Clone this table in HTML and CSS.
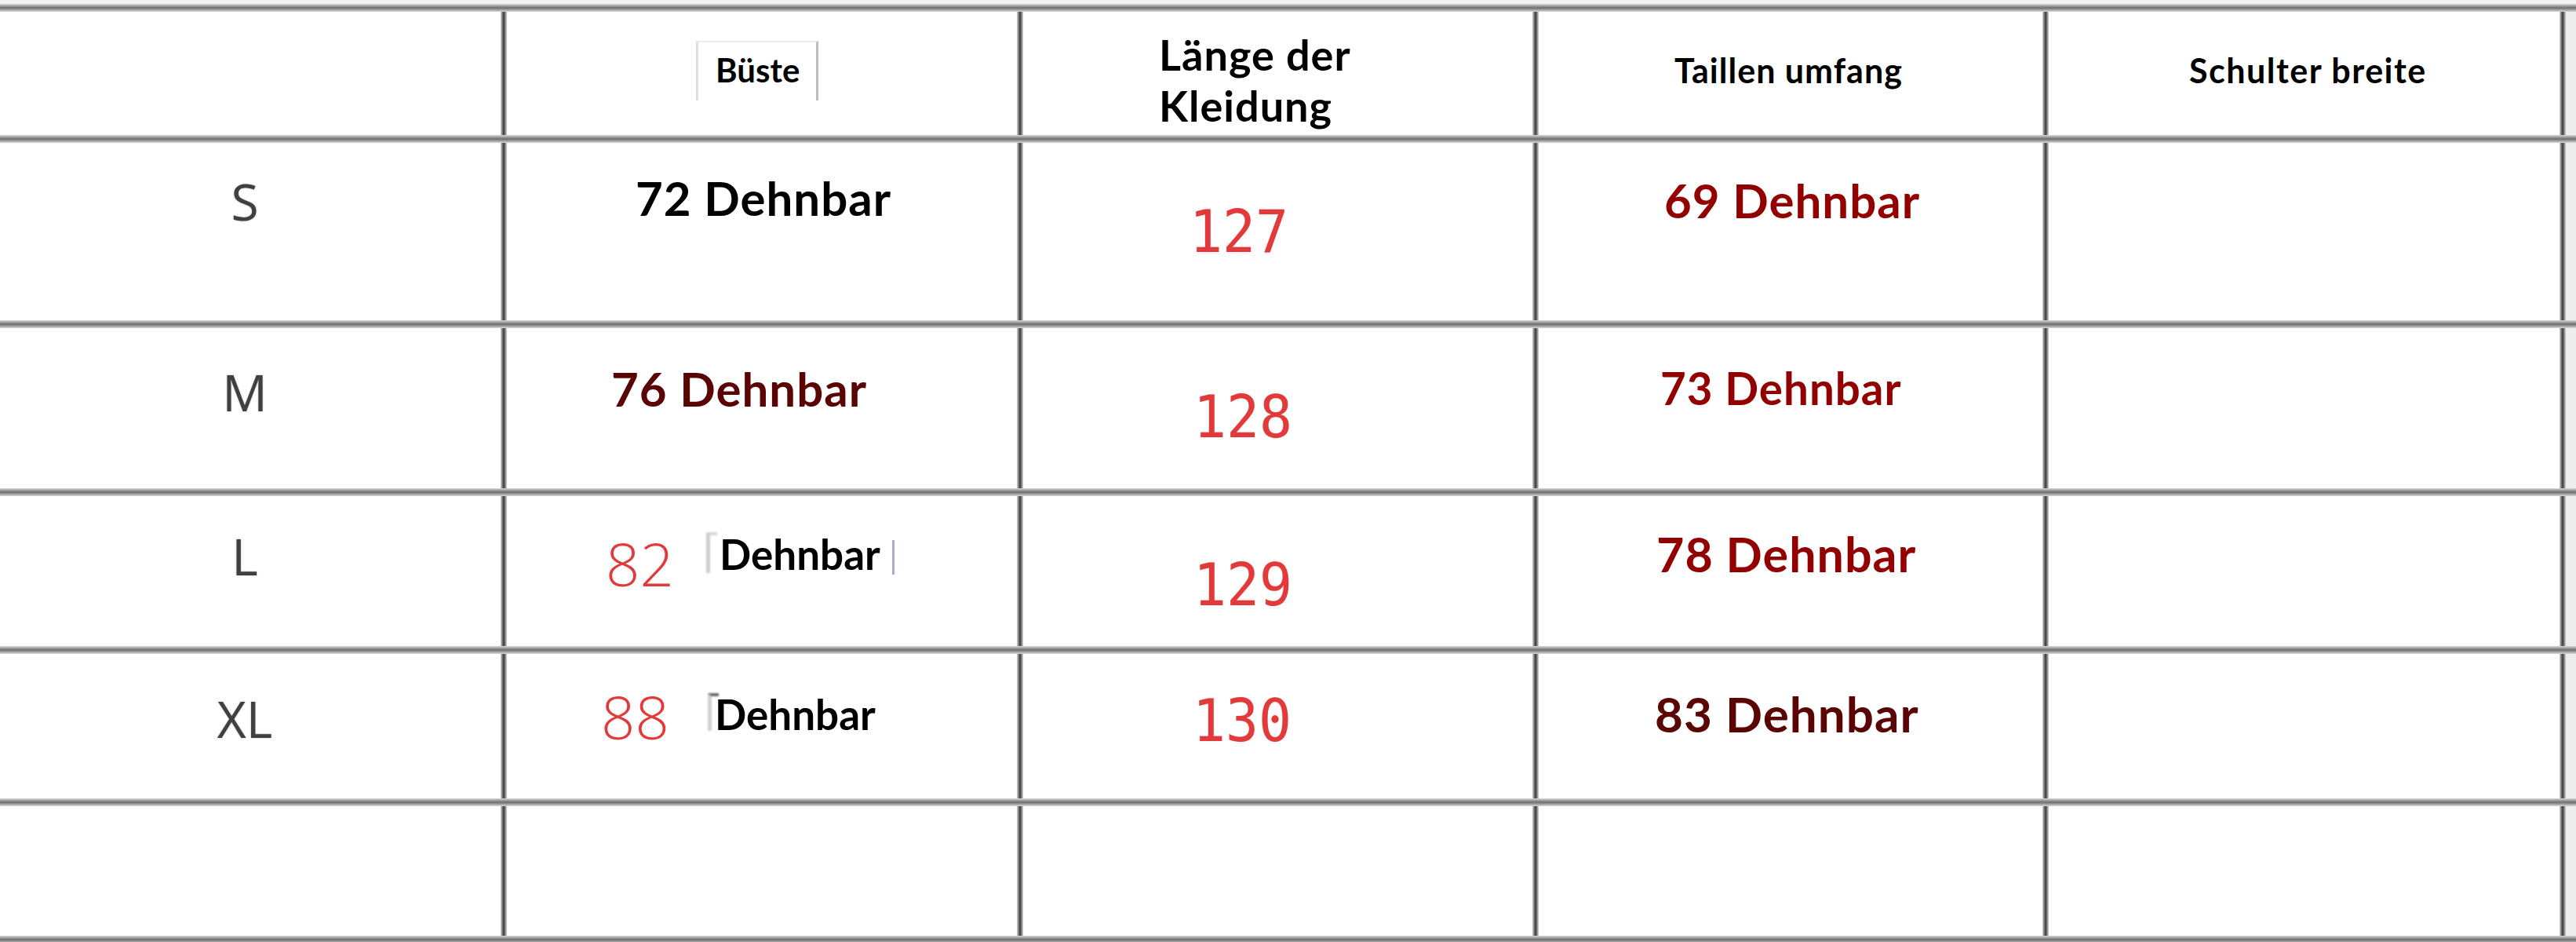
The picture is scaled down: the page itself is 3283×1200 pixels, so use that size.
FILE: index.html
```html
<!DOCTYPE html>
<html lang="de">
<head>
<meta charset="utf-8">
<title>Größentabelle</title>
<link rel="stylesheet" href="styles.css">
</head>
<body>
<div class="sheet">
  <div class="topband"></div>
  <div class="hline"></div>

  <div class="row r-head">
    <div class="cell"></div>
    <div class="vline"></div>
    <div class="cell"><span class="box-label"><span class="bold h-buste">Büste</span></span></div>
    <div class="vline"></div>
    <div class="cell"><span class="bold h-laenge">Länge der<br>Kleidung</span></div>
    <div class="vline"></div>
    <div class="cell"><span class="bold h-taille">Taillen umfang</span></div>
    <div class="vline"></div>
    <div class="cell"><span class="bold h-schulter">Schulter breite</span></div>
    <div class="vline"></div>
    <div class="cell edge"></div>
  </div>
  <div class="hline"></div>

  <div class="row r-s">
    <div class="cell"><span class="size sz-s">S</span></div>
    <div class="vline"></div>
    <div class="cell"><span class="bold black s-bust">72 Dehnbar</span></div>
    <div class="vline"></div>
    <div class="cell"><span class="mono s-len">127</span></div>
    <div class="vline"></div>
    <div class="cell"><span class="bold red s-waist">69 Dehnbar</span></div>
    <div class="vline"></div>
    <div class="cell"></div>
    <div class="vline"></div>
    <div class="cell edge"></div>
  </div>
  <div class="hline"></div>

  <div class="row r-m">
    <div class="cell"><span class="size sz-m">M</span></div>
    <div class="vline"></div>
    <div class="cell"><span class="bold maroon m-bust">76 Dehnbar</span></div>
    <div class="vline"></div>
    <div class="cell"><span class="mono m-len">128</span></div>
    <div class="vline"></div>
    <div class="cell"><span class="bold red m-waist">73 Dehnbar</span></div>
    <div class="vline"></div>
    <div class="cell"></div>
    <div class="vline"></div>
    <div class="cell edge"></div>
  </div>
  <div class="hline"></div>

  <div class="row r-l">
    <div class="cell"><span class="size sz-l">L</span></div>
    <div class="vline"></div>
    <div class="cell">
      <span class="thin l-num">82</span>
      <span class="ghost-bracket l-bracket"></span>
      <span class="bold black small l-text">Dehnbar</span>
      <span class="caret l-caret"></span>
    </div>
    <div class="vline"></div>
    <div class="cell"><span class="mono l-len">129</span></div>
    <div class="vline"></div>
    <div class="cell"><span class="bold red l-waist">78 Dehnbar</span></div>
    <div class="vline"></div>
    <div class="cell"></div>
    <div class="vline"></div>
    <div class="cell edge"></div>
  </div>
  <div class="hline"></div>

  <div class="row r-xl">
    <div class="cell"><span class="size sz-xl">XL</span></div>
    <div class="vline"></div>
    <div class="cell">
      <span class="thin xl-num">88</span>
      <span class="ghost-bracket dark xl-bracket"></span>
      <span class="bold black small xl-text">Dehnbar</span>
    </div>
    <div class="vline"></div>
    <div class="cell"><span class="mono xl-len">130</span></div>
    <div class="vline"></div>
    <div class="cell"><span class="bold maroon xl-waist">83 Dehnbar</span></div>
    <div class="vline"></div>
    <div class="cell"></div>
    <div class="vline"></div>
    <div class="cell edge"></div>
  </div>
  <div class="hline"></div>

  <div class="row r-empty">
    <div class="cell"></div>
    <div class="vline"></div>
    <div class="cell"></div>
    <div class="vline"></div>
    <div class="cell"></div>
    <div class="vline"></div>
    <div class="cell"></div>
    <div class="vline"></div>
    <div class="cell"></div>
    <div class="vline"></div>
    <div class="cell edge"></div>
  </div>
  <div class="hline"></div>
</div>
</body>
</html>
```

FILE: styles.css
```css
* { box-sizing: border-box; }

html, body {
  margin: 0;
  padding: 0;
  background: #ffffff;
  overflow: hidden;
}

.sheet {
  width: 3283px;
  display: flex;
  flex-direction: column;
}

.topband {
  height: 5px;
  background: #f1f1f1;
}

.hline {
  height: 10px;
  background: linear-gradient(to bottom, #dadada 0%, #a2a2a2 25%, #6e6e6e 50%, #a2a2a2 75%, #dadada 100%);
}

.row {
  display: grid;
  grid-template-columns: 638px 8px 650px 8px 649px 8px 642px 8px 651px 8px 13px;
}

.r-head { height: 157px; }
.r-s { height: 226px; }
.r-m { height: 204px; }
.r-l { height: 191px; }
.r-xl { height: 184px; }
.r-empty { height: 165px; }

.vline {
  background: linear-gradient(to right, #d4d4d4 0%, #666 35%, #363636 50%, #666 65%, #d4d4d4 100%);
}

.cell {
  display: grid;
  align-items: start;
  justify-items: start;
  background: #fff;
  min-width: 0;
}

.cell > * {
  grid-area: 1 / 1;
}

.cell.edge { background: #ededed; }

/* ---------- text styles ---------- */
.bold {
  font-family: Lato, "Liberation Sans", sans-serif;
  font-weight: 700;
  line-height: 1;
  white-space: nowrap;
}

.black { color: #000; }
.red { color: #930000; }
.maroon { color: #5a0404; }

.size {
  font-family: "Open Sans", "Noto Sans", sans-serif;
  font-weight: 500;
  font-size: 64px;
  line-height: 1;
  color: #404040;
  text-shadow: 0 0 2px rgba(0, 0, 0, 0.35);
  justify-self: center;
  margin-right: 14px;
}

.mono {
  font-family: "DejaVu Sans Mono", "Liberation Mono", monospace;
  font-size: 75px;
  line-height: 1;
  color: #e23a3a;
  transform: scaleX(0.93);
  transform-origin: left top;
  text-shadow: 0 0 1px rgba(226, 58, 58, 0.4);
}

.thin {
  font-family: "Open Sans", "Noto Sans", sans-serif;
  font-weight: 300;
  font-size: 76px;
  line-height: 1;
  color: #e23a3a;
}

/* ---------- header ---------- */
.box-label {
  margin: 37px 0 0 241px;
  padding: 14px 21px 18px 22px;
  border-left: 3px solid #e0e0e0;
  border-right: 3px solid #bdbdbd;
  border-top: 2px solid #ececec;
}

.h-buste { display: block; font-size: 42px; }

.h-laenge {
  font-size: 54px;
  letter-spacing: 1px;
  line-height: 65px;
  margin: 22px 0 0 173px;
}

.h-taille {
  font-size: 43px;
  letter-spacing: 1px;
  margin: 53px 0 0 173px;
}

.h-schulter {
  font-size: 43px;
  letter-spacing: 1.5px;
  margin: 53px 0 0 179px;
}

/* ---------- row S ---------- */
.sz-s { margin-top: 43px; }
.s-bust { font-size: 60px; letter-spacing: 1px; margin: 40px 0 0 164px; }
.s-len { margin: 76px 0 0 212px; }
.s-waist { font-size: 60px; letter-spacing: 1px; margin: 43px 0 0 160px; }

/* ---------- row M ---------- */
.sz-m { margin-top: 50px; }
.m-bust { font-size: 60px; letter-spacing: 1px; margin: 47px 0 0 133px; }
.m-len { margin: 76px 0 0 217px; }
.m-waist { font-size: 56.5px; letter-spacing: 1px; margin: 48px 0 0 155px; }

/* ---------- row L ---------- */
.sz-l { margin-top: 45px; }
.l-num { margin: 48px 0 0 126px; }
.small { font-size: 53px; }
.l-text { margin: 47px 0 0 271px; }
.l-len { margin: 76px 0 0 217px; }
.l-waist { font-size: 61px; letter-spacing: 1px; margin: 43px 0 0 150px; }

.ghost-bracket {
  width: 14px;
  height: 52px;
  border-left: 5px solid #cdcdcd;
  border-top: 4px solid #d6d6d6;
  filter: blur(1px);
}

.ghost-bracket.dark {
  height: 48px;
  border-left-color: #d0d0d0;
  border-top-color: #6a6a6a;
}

.l-bracket { margin: 46px 0 0 254px; }

.caret {
  width: 3px;
  height: 44px;
  background: #a9adc9;
}

.l-caret { margin: 56px 0 0 491px; }

/* ---------- row XL ---------- */
.sz-xl { margin-top: 51px; }
.xl-num { margin: 42px 0 0 120px; }
.xl-bracket { margin: 50px 0 0 256px; }
.xl-text { margin: 50px 0 0 265px; }
.xl-len { margin: 48px 0 0 216px; }
.xl-waist { font-size: 62px; letter-spacing: 1px; margin: 45px 0 0 148px; }
```
